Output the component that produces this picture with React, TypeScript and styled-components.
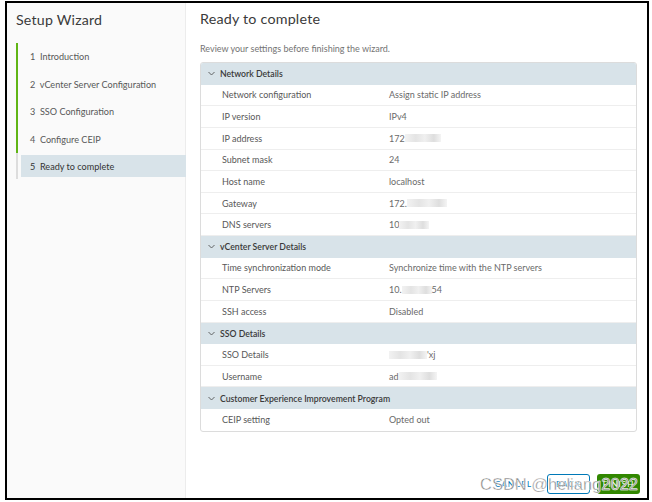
import React from 'react';
import styled, {createGlobalStyle} from 'styled-components';

const GlobalStyle = createGlobalStyle`
  html, body {
    margin: 0;
    padding: 0;
    background: #ffffff;
    font-family: Lato, "Open Sans", sans-serif;
  }
  * {
    box-sizing: border-box;
  }
`

type Row = { label: string, value: string, masked?: string }
type Section = { title: string, rows: Row[] }

const sections: Section[] = [
    {
        title: 'Network Details',
        rows: [
            {label: 'Network configuration', value: 'Assign static IP address'},
            {label: 'IP version', value: 'IPv4'},
            {label: 'IP address', value: '172', masked: 'a'},
            {label: 'Subnet mask', value: '24'},
            {label: 'Host name', value: 'localhost'},
            {label: 'Gateway', value: '172.', masked: 'b'},
            {label: 'DNS servers', value: '10', masked: 'c'},
        ]
    },
    {
        title: 'vCenter Server Details',
        rows: [
            {label: 'Time synchronization mode', value: 'Synchronize time with the NTP servers'},
            {label: 'NTP Servers', value: '10.', masked: 'd'},
            {label: 'SSH access', value: 'Disabled'},
        ]
    },
    {
        title: 'SSO Details',
        rows: [
            {label: 'SSO Details', value: '', masked: 'e'},
            {label: 'Username', value: 'ad', masked: 'f'},
        ]
    },
    {
        title: 'Customer Experience Improvement Program',
        rows: [
            {label: 'CEIP setting', value: 'Opted out'},
        ]
    },
]

const steps = [
    '1  Introduction',
    '2  vCenter Server Configuration',
    '3  SSO Configuration',
    '4  Configure CEIP',
    '5  Ready to complete',
]

const Masked = ({kind}: { kind: string }) => {
    if (kind === 'd') {
        return <><Blur w={30}/><span>54</span></>
    }
    if (kind === 'e') {
        return <><Blur w={38}/><span>'xj</span></>
    }
    const widths: Record<string, number> = {a: 36, b: 40, c: 30, f: 38}
    return <Blur w={widths[kind] ?? 30}/>
}

const Chevron = () => (
    <svg width="7" height="5" viewBox="0 0 7 5">
        <path d="M0.5 1 L3.5 4 L6.5 1" fill="none" stroke="#565656" strokeWidth="0.9"/>
    </svg>
)

export default function App() {
    return (
        <>
            <GlobalStyle/>
            <Frame>
                <Sidebar>
                    <SideTitle>Setup Wizard</SideTitle>
                    <StepList>
                        {steps.map((step, index) => (
                            <Step key={`step_${index}`} done={index < 4} active={index === 4}>
                                <StepText active={index === 4}>{step}</StepText>
                            </Step>
                        ))}
                    </StepList>
                </Sidebar>
                <Main>
                    <Title>Ready to complete</Title>
                    <Subtitle>Review your settings before finishing the wizard.</Subtitle>
                    <Table>
                        {sections.map(section => (
                            <React.Fragment key={section.title}>
                                <SectionHeader>
                                    <Chevron/>
                                    <span>{section.title}</span>
                                </SectionHeader>
                                {section.rows.map(row => (
                                    <TableRow key={row.label}>
                                        <Label>{row.label}</Label>
                                        <Value>
                                            {row.value}
                                            {row.masked && <Masked kind={row.masked}/>}
                                        </Value>
                                    </TableRow>
                                ))}
                            </React.Fragment>
                        ))}
                    </Table>
                    <Footer>
                        <LinkButton>CANCEL</LinkButton>
                        <OutlineButton>BACK</OutlineButton>
                        <PrimaryButton>FINISH</PrimaryButton>
                        <Watermark>CSDN @heliang2022</Watermark>
                    </Footer>
                </Main>
            </Frame>
        </>
    );
}

const Frame = styled.div`
  margin: 1px 0 0 5px;
  width: 644px;
  height: 499px;
  border: 2px solid #000;
  display: flex;
  background: #fff;
  overflow: hidden;
`

const Sidebar = styled.div`
  width: 179px;
  flex-shrink: 0;
  background: #fafafa;
  border-right: 1px solid #ececec;
  padding: 7px 0 0 9px;
`

const SideTitle = styled.div`
  font-size: 14.2px;
  line-height: 20px;
  color: #3a3a3a;
  font-weight: 400;
  letter-spacing: 0.2px;
  margin-bottom: 13px;
`

const StepList = styled.div`
  display: flex;
  flex-direction: column;
  padding-bottom: 2px;
  border-left: 2px solid #dddddd;
  width: 170px;
`

const Step = styled.div<{ done: boolean, active: boolean }>`
  height: 27.5px;
  display: flex;
  align-items: center;
  margin-left: -2px;
  border-left: 2px solid ${p => p.done ? '#60b515' : 'transparent'};
  padding-left: 3px;
  ${p => p.active && `
    margin-top: 2px;
    height: 22px;
  `}
`

const StepText = styled.div<{ active: boolean }>`
  flex: 1;
  height: 22px;
  display: flex;
  align-items: center;
  padding-left: 9px;
  white-space: pre;
  font-size: 9.1px;
  color: ${p => p.active ? '#333' : '#585858'};
  background: ${p => p.active ? '#d8e3e9' : 'transparent'};
`

const Main = styled.div`
  flex: 1;
  padding: 6px 10px 0 14px;
  display: flex;
  flex-direction: column;
  position: relative;
`

const Title = styled.div`
  font-size: 14.3px;
  line-height: 20px;
  color: #3a3a3a;
  letter-spacing: 0.2px;
`

const Subtitle = styled.div`
  font-size: 9px;
  color: #747474;
  margin-top: 14px;
  margin-bottom: 8px;
`

const Table = styled.div`
  width: 437px;
  border: 1px solid #dcdcdc;
  border-radius: 3px;
  overflow: hidden;
  display: flex;
  flex-direction: column;
`

const SectionHeader = styled.div`
  height: 21.6px;
  background: #d8e3e9;
  display: flex;
  align-items: center;
  gap: 5px;
  padding-left: 7px;
  font-size: 8.7px;
  font-weight: 600;
  color: #3a3a3a;
`

const TableRow = styled.div`
  height: 21.65px;
  display: grid;
  grid-template-columns: 167px 1fr;
  align-items: center;
  padding-left: 21px;
  font-size: 9px;
  color: #585858;
  border-bottom: 1px solid #eeeeee;

  &:last-child {
    border-bottom: none;
  }
`

const Label = styled.div``

const Value = styled.div`
  display: flex;
  align-items: center;
  color: #6a6a6a;
`

const Blur = styled.span<{ w: number }>`
  display: inline-block;
  width: ${p => p.w}px;
  height: 8px;
  background: linear-gradient(90deg, #f2f2f2, #e4e4e4 30%, #f0f0f0 55%, #dedede 80%, #f4f4f4);
`

const Footer = styled.div`
  margin-top: auto;
  margin-bottom: 4px;
  margin-right: -3px;
  display: flex;
  justify-content: flex-end;
  align-items: center;
  gap: 7px;
  position: relative;
`

const LinkButton = styled.div`
  font-size: 8px;
  color: #0079b8;
  letter-spacing: 1px;
  padding: 0 8px;
`

const OutlineButton = styled.div`
  width: 43px;
  height: 20px;
  border: 1px solid #0079b8;
  border-radius: 3px;
  font-size: 8px;
  color: #0079b8;
  letter-spacing: 1px;
  display: flex;
  align-items: center;
  justify-content: center;
`

const PrimaryButton = styled.div`
  width: 43px;
  height: 20px;
  background: #318700;
  border-radius: 3px;
  font-size: 8px;
  color: #fff;
  letter-spacing: 1px;
  display: flex;
  align-items: center;
  justify-content: center;
`

const Watermark = styled.div`
  position: absolute;
  right: 2px;
  top: 1px;
  font-family: "Liberation Sans", Arial, sans-serif;
  font-size: 16.5px;
  color: rgba(110, 110, 110, 0.85);
  -webkit-text-stroke: 0.4px #fff;
  text-shadow: 0 0 1px #fff;
  white-space: nowrap;
`
